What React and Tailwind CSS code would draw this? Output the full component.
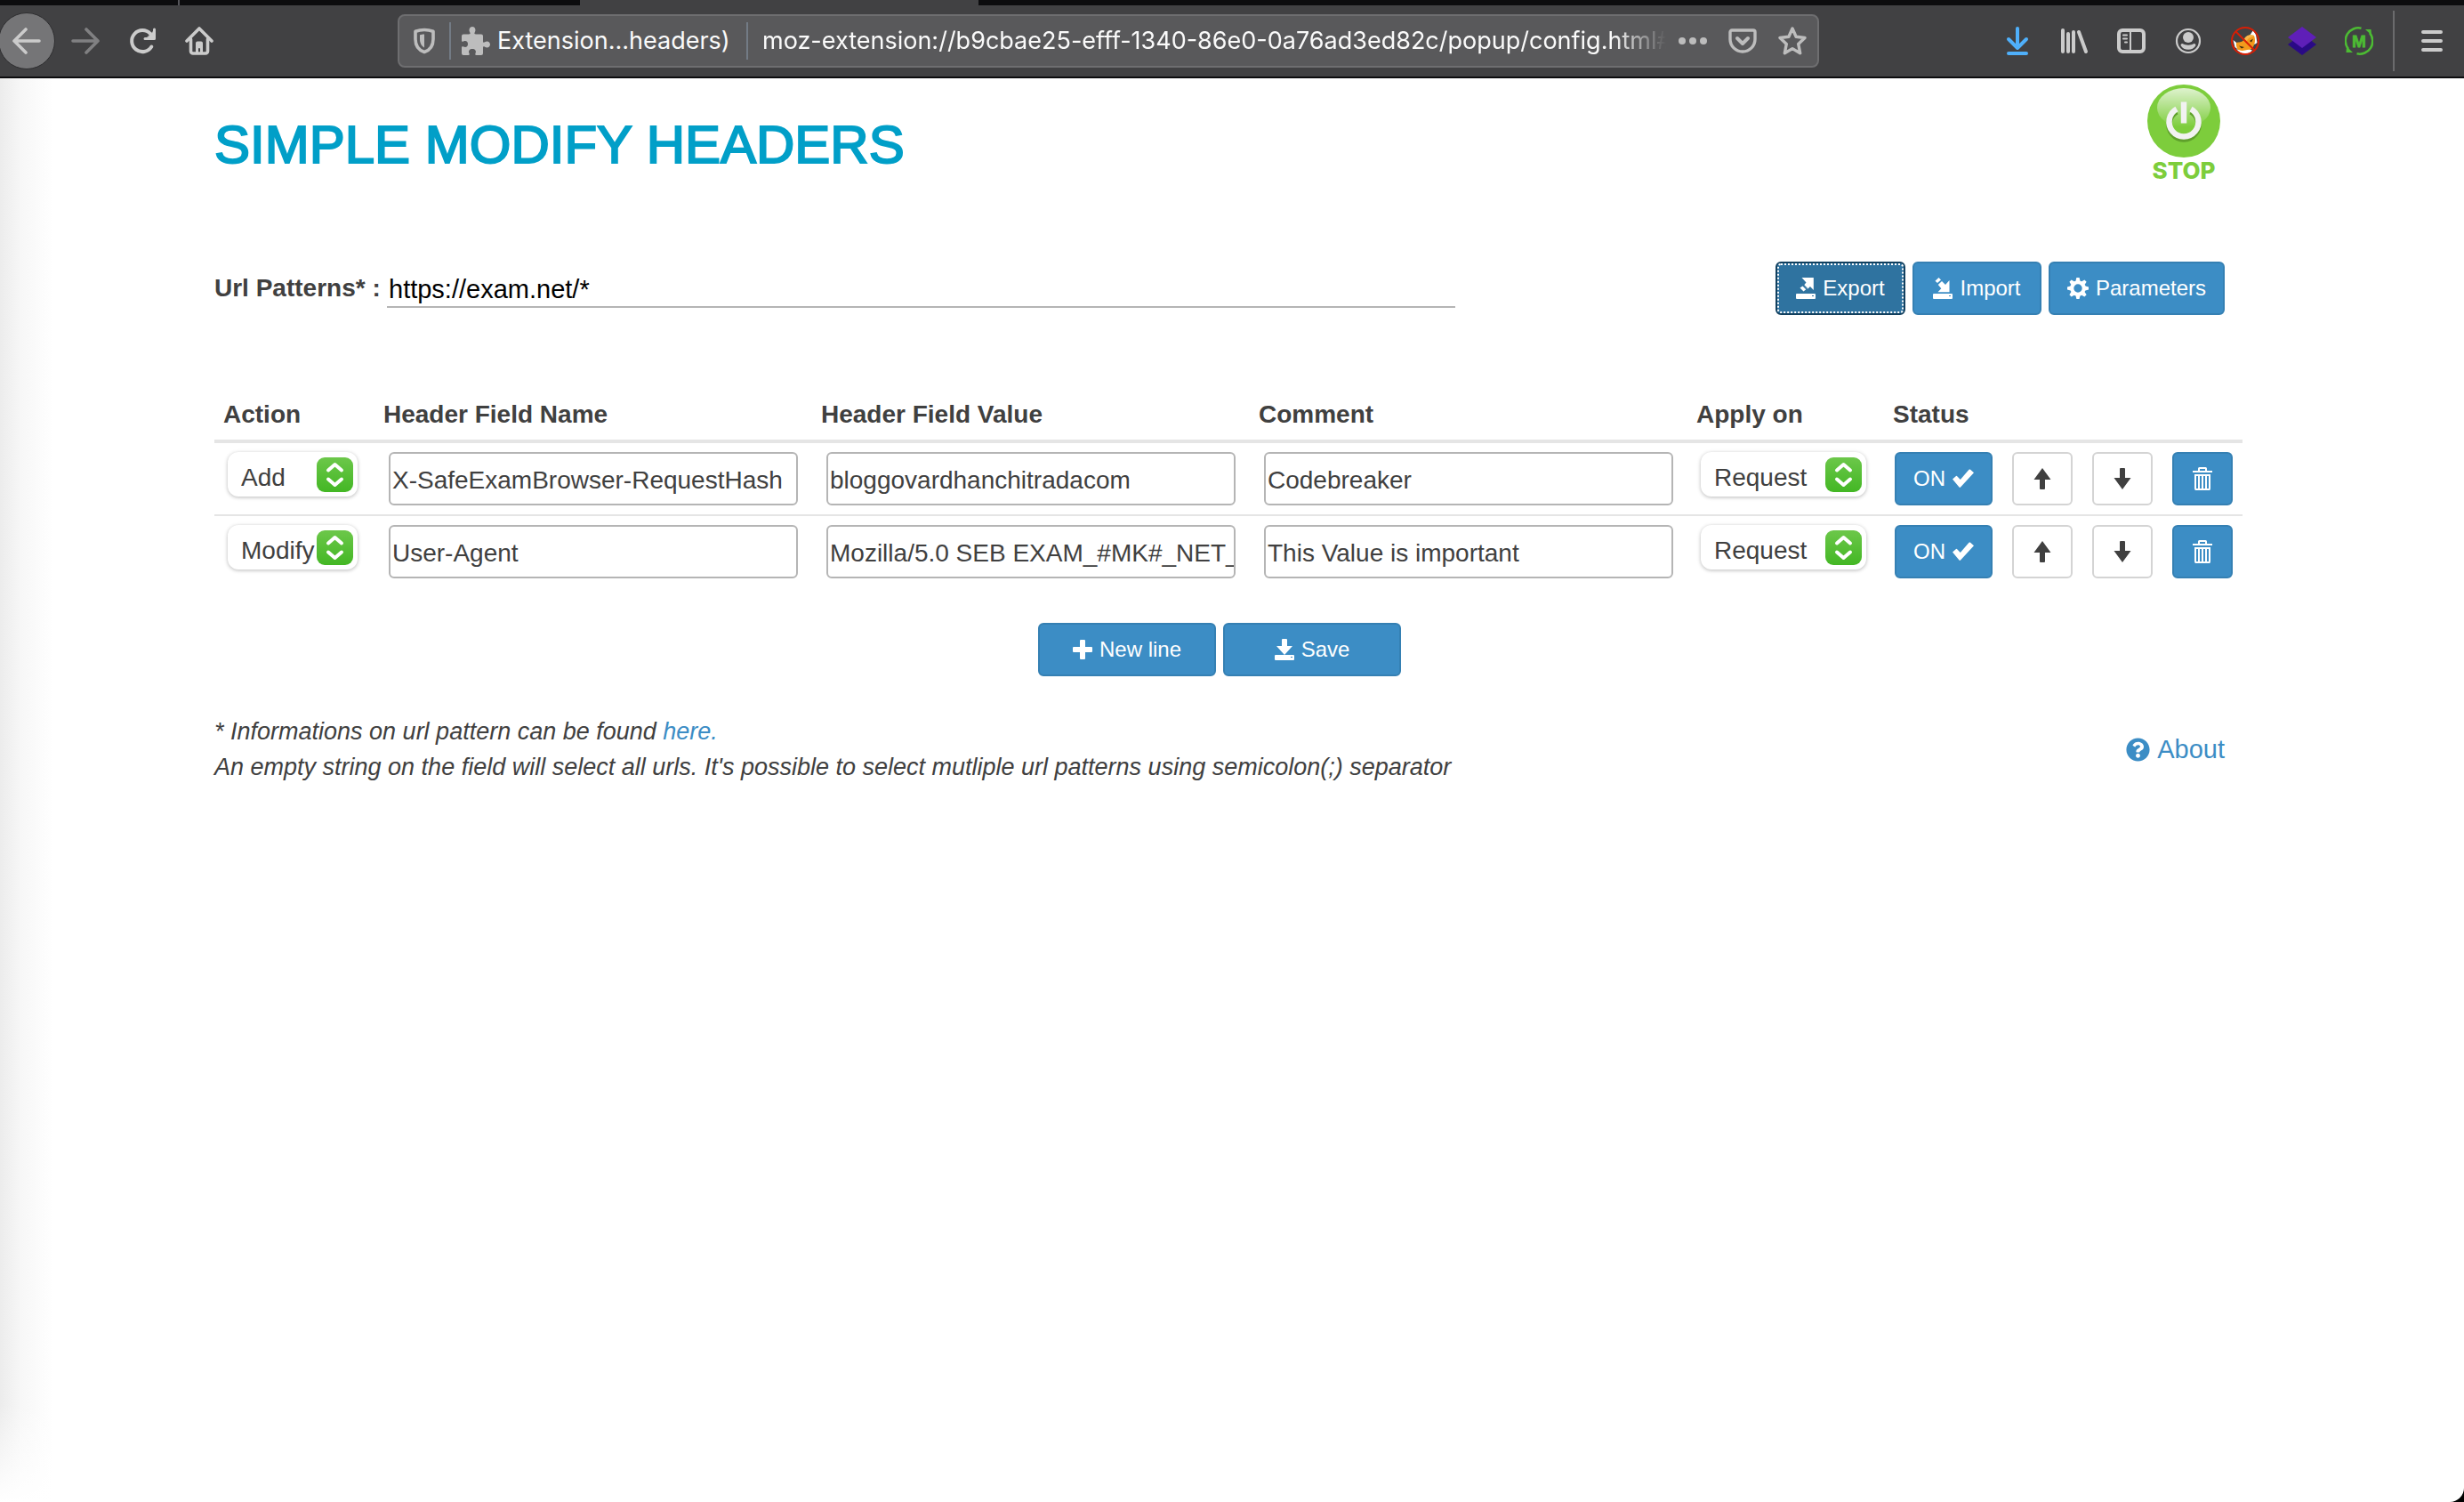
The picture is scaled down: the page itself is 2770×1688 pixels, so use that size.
import React from "react";
import { FaQuestionCircle } from "react-icons/fa";

/* ---------- browser toolbar icons ---------- */

const stroke = {
  fill: "none",
  stroke: "currentColor",
  strokeLinecap: "round",
  strokeLinejoin: "round",
};

function BackIcon() {
  return (
    <svg viewBox="0 0 32 32" className="size-8" {...stroke} strokeWidth="3.6">
      <path d="M30 16H2M15 3 2 16l13 13" />
    </svg>
  );
}

function ForwardIcon() {
  return (
    <svg viewBox="0 0 32 32" className="size-8" {...stroke} strokeWidth="3.6">
      <path d="M2 16h28M17 3l13 13-13 13" />
    </svg>
  );
}

function ReloadIcon() {
  return (
    <svg viewBox="0 0 32 32" className="size-8" {...stroke} strokeWidth="4">
      <path d="M26.300 22.500A12 12 0 1 1 25 8" />
      <path d="M29.500 3v10.500H19" strokeWidth="3" />
      <path d="M29 5v8h-8z" fill="currentColor" strokeWidth="1" />
    </svg>
  );
}

function HomeIcon() {
  return (
    <svg viewBox="0 0 32 32" className="size-8" {...stroke} strokeWidth="3.6">
      <path d="M2 16 16 2l14 14" />
      <path d="M6.500 14v13.500a2.500 2.500 0 0 0 2.500 2.500h14a2.500 2.500 0 0 0 2.500-2.500V14" />
      <path
        d="M12 31V18.500a2 2 0 0 1 2-2h4a2 2 0 0 1 2 2V31h-3v-6a1 1 0 0 0-2 0v6z"
        fill="currentColor"
        stroke="none"
      />
    </svg>
  );
}

function ShieldIcon() {
  return (
    <svg viewBox="0 0 32 32" className="size-8" {...stroke}>
      <path
        d="M16 3.500c3.500 0 6.800.6 10 1.700V14c0 7.500-4 12.500-10 14.500C10 26.500 6 21.500 6 14V5.200c3.200-1.100 6.500-1.700 10-1.700z"
        strokeWidth="3.600"
      />
      <path
        d="M16 8.500c-2 0-3.500.2-5 .7V14c0 4.500 2 8 5 9.500z"
        fill="currentColor"
        stroke="none"
      />
    </svg>
  );
}

function PuzzleIcon() {
  return (
    <svg viewBox="0 0 32 32" className="size-8" fill="currentColor">
      <path d="M8 8.500C9.500 8.500 10 7.800 9.300 6.500 7.500 3.500 9 0 12 0s4.500 3.500 2.700 6.500C14 7.800 14.500 8.500 16 8.500h6a2 2 0 0 1 2 2v6c0 1.300 1 1.600 2 .8 3-2 6 0 6 2.700s-3 4.700-6 2.700c-1-.8-2-.5-2 .8V30a2 2 0 0 1-2 2h-5.500c-1.300 0-1.500-.9-1-2 1.300-3-.5-5-3.500-5s-4.800 2-3.500 5c.5 1.100.3 2-1 2H2a2 2 0 0 1-2-2v-6.500c0-1.300.9-1.500 2-1 3 1.300 5-.3 5-3s-2-4.300-5-3c-1.100.5-2 .3-2-1V10.500a2 2 0 0 1 2-2z" />
    </svg>
  );
}

function PocketIcon() {
  return (
    <svg viewBox="0 0 32 32" className="size-8" {...stroke} strokeWidth="4">
      <path d="M4 4h24a2 2 0 0 1 2 2v8a14 14 0 0 1-28 0V6a2 2 0 0 1 2-2z" strokeWidth="3.400" />
      <path d="m10 13 6 6 6-6" />
    </svg>
  );
}

function StarIcon() {
  return (
    <svg viewBox="0 0 32 32" className="size-8" {...stroke} strokeWidth="3.4">
      <path d="m16 2 4.100 9.300L30 12.500l-7.300 6.900 2 10.300L16 24.600l-8.700 5.100 2-10.300L2 12.500l9.900-1.200z" />
    </svg>
  );
}

function DownloadIcon() {
  return (
    <svg viewBox="0 0 32 32" className="size-8 text-[#4fb0fb]" {...stroke} strokeWidth="4">
      <path d="M16 2v22M6 14l10 10 10-10M6 30h20" />
    </svg>
  );
}

function LibraryIcon() {
  return (
    <svg viewBox="0 0 32 32" className="size-8" {...stroke} strokeWidth="4">
      <path d="M3 4v24M9 8v20M15 6v22M21 6l8 22" />
    </svg>
  );
}

function SidebarIcon() {
  return (
    <svg viewBox="0 0 32 32" className="size-8" {...stroke} strokeWidth="4">
      <rect x="2" y="4" width="28" height="24" rx="4" />
      <path d="M15 4v24M7 9.500h4M7 13.500h4M9 17.500h2" strokeWidth="2" />
    </svg>
  );
}

function AccountIcon() {
  return (
    <svg viewBox="0 0 32 32" className="size-8" {...stroke} strokeWidth="2.2">
      <circle cx="16" cy="16" r="13" />
      <circle cx="16" cy="12" r="6" fill="currentColor" stroke="none" />
      <path
        d="M9.500 19c2 1.200 4 1.700 6.500 1.700s4.500-.5 6.500-1.700c1.600 0 2.300 1.200 1.700 2.500-1.400 2.700-4.700 4.300-8.200 4.300s-6.800-1.600-8.200-4.300c-.6-1.300.1-2.500 1.700-2.500z"
        fill="currentColor"
        stroke="none"
      />
    </svg>
  );
}

function FoxIcon() {
  return (
    <svg viewBox="0 0 32 32" className="size-8">
      <path d="M21 10 25 4l3 5 1.500 9-3 2zM2.500 15l5 4 1 7-4-3z" fill="#fff" />
      <path d="M6 18c2.500-1 6 0 9-3.500 1-4 6-6.500 11-4.500 2 5 1 11-3 15-5 4-11 4-14 2-2.500-2-3.500-6-3-9z" fill="#f39a1c" />
      <path d="M15 14.500c1-4 6-6.500 11-4.500-2 2-7 2-8 6z" fill="#f7b54a" />
      <path d="M6 25c3 1.500 6 2.500 10 1.500 3-1 6-1 8 0-2.500 3-5.500 4-8.500 4S8.500 28.500 6 25z" fill="#fff" />
      <path d="m9 21.500 6 1.500-3 1.500zM21 16l4-2.500-2 4z" fill="#3a2a10" />
      <circle cx="16" cy="16" r="15" fill="none" stroke="#d81e05" strokeWidth="2" />
      <path d="m5.500 5.500 21 21" stroke="#d81e05" strokeWidth="2" />
    </svg>
  );
}

function LayersIcon() {
  return (
    <svg viewBox="0 0 32 32" className="size-8">
      <path d="m16 8 16 12-16 12L0 20z" fill="#2a0a85" />
      <path d="m16 0 16 12-16 12L0 12z" fill="#5f1fb8" />
    </svg>
  );
}

function MIcon() {
  return (
    <svg viewBox="0 0 32 32" className="size-8" fill="none" stroke="#4cbb33" strokeWidth="2.6">
      <path d="M18.500 1.700A14.500 14.500 0 0 0 4 25" />
      <path d="M13.500 30.300A14.500 14.500 0 0 0 28 7" />
      <path d="M23 3h6.500l.5 6.500zM9 29H1.500L2 22z" fill="#4cbb33" stroke="none" />
      <text
        x="16"
        y="23"
        textAnchor="middle"
        fill="#4cbb33"
        stroke="#4cbb33"
        strokeWidth="0.8"
        className="font-['Liberation_Sans',sans-serif] text-[19px] font-bold"
      >
        M
      </text>
    </svg>
  );
}

function MenuIcon() {
  return (
    <svg viewBox="0 0 32 32" className="size-8" {...stroke} strokeWidth="4">
      <path d="M6 6h20M6 16h20M6 26h20" />
    </svg>
  );
}

/* ---------- page icons ---------- */

function Tray() {
  return <path d="M1 18h20a1 1 0 0 1 1 1v4a1 1 0 0 1-1 1H1a1 1 0 0 1-1-1v-4a1 1 0 0 1 1-1zm17 2v1h2v-1z" />;
}

function ExportIcon() {
  return (
    <svg viewBox="0 0 22 24" className="h-6 w-[22px]" fill="currentColor">
      <path d="M6.500 0h13.300v14l-3.800-4-3 3-4-4.500 2.500-3z" />
      <path d="m7.500 9.500 3.800 3.800-2.800 2.200-4-4z" />
      <path d="m6.800 8.700 5.200 5.200" stroke="#2f73a0" strokeWidth="1" transform="translate(1.500 -1)" />
      <Tray />
    </svg>
  );
}

function ImportIcon() {
  return (
    <svg viewBox="0 0 22 24" className="h-6 w-[22px]" fill="currentColor">
      <path d="M6.500 0 9 2.500 5 6 2.500 3.700z" />
      <path d="m10 4 4 4 4.500-5v13.200H5.500l3.800-4-3.500-4.200z" />
      <Tray />
    </svg>
  );
}

function CogIcon() {
  return (
    <svg viewBox="0 0 24 24" className="size-6" fill="currentColor">
      <circle cx="12" cy="12" r="6.700" fill="none" stroke="currentColor" strokeWidth="4" />
      {[0, 45, 90, 135, 180, 225, 270, 315].map((a) => (
        <path key={a} d="M9.300 4.500 10.400 0h3.200l1.100 4.500z" transform={`rotate(${a} 12 12)`} />
      ))}
    </svg>
  );
}

function PlusIcon() {
  return (
    <svg viewBox="0 0 22 22" className="size-[22px]" fill="currentColor">
      <rect x="8" y="0" width="6" height="22" rx="1" />
      <rect x="0" y="8" width="22" height="6" rx="1" />
    </svg>
  );
}

function SaveIcon() {
  return (
    <svg viewBox="0 0 22 24" className="h-6 w-[22px]" fill="currentColor">
      <path d="M9 0h4a1 1 0 0 1 1 1v7h6l-9 10L2 8h6V1a1 1 0 0 1 1-1z" />
      <Tray />
    </svg>
  );
}

function CheckIcon() {
  return (
    <svg viewBox="0 0 24 22" className="h-[22px] w-6" fill="currentColor">
      <path d="M0 11.500 4 8q.6-.4 1.200.2L8.800 12 18.500.8q.6-.6 1.300-.2L24 4.300 9 20.600q-.8.800-1.500 0z" />
    </svg>
  );
}

function ArrowIcon({ down }) {
  return (
    <svg viewBox="0 0 20 24" className={down ? "h-6 w-5 rotate-180" : "h-6 w-5"} fill="currentColor">
      <path d="M10 0 19.500 13H13v10a1 1 0 0 1-1 1H8a1 1 0 0 1-1-1V13H.5z" />
    </svg>
  );
}

function TrashIcon() {
  return (
    <svg viewBox="0 0 22 26" className="h-[26px] w-[22px]" fill="none" stroke="currentColor">
      <path d="M7 4V1.500q0-.5.500-.5h7q.5 0 .5.500V4" strokeWidth="2" />
      <path d="M0 5h22" strokeWidth="2" />
      <path d="M3 8v16q0 1 1 1h14q1 0 1-1V8M2 9h18M2.500 25h17" strokeWidth="2" />
      <path d="M7 9v15M11 9v15M15 9v15" strokeWidth="2" />
    </svg>
  );
}

function StopButton() {
  return (
    <button type="button" className="mr-1 flex flex-col items-center" aria-label="Stop">
      <svg viewBox="0 0 84 84" className="size-[84px]">
        <defs>
          <linearGradient id="gloss" x1="0" y1="0" x2="0" y2="1">
            <stop offset="0" stopColor="#fff" stopOpacity="0.750" />
            <stop offset="1" stopColor="#fff" stopOpacity="0" />
          </linearGradient>
        </defs>
        <circle cx="42" cy="42" r="41" fill="#7dcd3c" />
        <ellipse cx="42" cy="27" rx="30" ry="22" fill="url(#gloss)" />
        <g fill="none" strokeWidth="6.500">
          <path d="M34 29.500A16.500 16.500 0 1 0 50 29.500" stroke="#5fa02b" transform="translate(0 2)" />
          <path d="M34 28.500A16.500 16.500 0 1 0 50 28.500" stroke="#f2f2f2" />
          <path d="M42 20.500v24" stroke="#f2f2f2" />
        </g>
      </svg>
      <span className="font-[Inter,sans-serif] text-[26px] leading-7 font-extrabold text-[#7dcd3c]">STOP</span>
    </button>
  );
}

/* ---------- controls ---------- */

const primary = "flex h-15 items-center justify-center gap-2 rounded-md border-2 border-[#3580b3] bg-[#3c8dc5] text-2xl text-white";

const cell = "border-b-2 border-[#e5e5e5] px-2.5 py-2.5 group-last:border-b-0";

function Select({ label, value, options }) {
  return (
    <div className="relative ml-[5px] h-[50px]">
      <select
        aria-label={label}
        defaultValue={value}
        className="h-[50px] w-full appearance-none rounded-xl bg-white pt-2 pl-[15px] text-[28px] leading-8 shadow-[0_1px_4px_rgba(0,0,0,0.28)]"
      >
        {options.map((o) => (
          <option key={o}>{o}</option>
        ))}
      </select>
      <svg viewBox="0 0 41 39" className="pointer-events-none absolute top-1.5 right-[5px] h-[39px] w-[41px]">
        <defs>
          <linearGradient id="stepper" x1="0" y1="0" x2="0" y2="1">
            <stop offset="0" stopColor="#6cc74a" />
            <stop offset="1" stopColor="#43b724" />
          </linearGradient>
        </defs>
        <rect width="41" height="39" rx="9" fill="url(#stepper)" />
        <path
          d="m13 14.500 7.500-6.500 7.500 6.500M13 24.500l7.500 6.500 7.500-6.500"
          fill="none"
          stroke="#fff"
          strokeWidth="4"
          strokeLinecap="round"
          strokeLinejoin="round"
        />
      </svg>
    </div>
  );
}

const rows = [
  { action: "Add", name: "X-SafeExamBrowser-RequestHash", value: "bloggovardhanchitradacom", comment: "Codebreaker" },
  { action: "Modify", name: "User-Agent", value: "Mozilla/5.0 SEB EXAM_#MK#_NET_", comment: "This Value is important" },
];

function Field({ label, value }) {
  return (
    <input
      type="text"
      aria-label={label}
      defaultValue={value}
      className="mx-1.5 block h-15 w-[calc(100%-12px)] rounded-md border-2 border-[#b5b5b5] bg-white pt-1 pl-0.5 text-[28px]"
    />
  );
}

function Divider() {
  return <span className="h-[42px] w-0.5 shrink-0 bg-[#737b85]" />;
}

function IconButton({ label, children, className = "" }) {
  return (
    <button type="button" aria-label={label} className={`flex size-8 shrink-0 items-center justify-center ${className}`}>
      {children}
    </button>
  );
}

function Browser() {
  return (
    <header className="border-b-2 border-[#0c0c0e] bg-[#414143] text-[#cbcbcb]">
      <div className="flex h-1.5">
        <div className="w-[202px] border-r-2 border-[#55555a] bg-[#0c0c0e]" />
        <div className="w-[450px] bg-[#0c0c0e]" />
        <div className="w-[448px]" />
        <div className="flex-1 bg-[#0c0c0e]" />
      </div>
      <nav className="flex h-20 items-center">
        <button
          type="button"
          aria-label="Back"
          className="-ml-0.5 flex size-16 items-center justify-center rounded-full border border-[#2e2e30] bg-[#757577]"
        >
          <BackIcon />
        </button>
        <IconButton label="Forward" className="ml-[18px] text-[#808082]"><ForwardIcon /></IconButton>
        <IconButton label="Reload" className="ml-8"><ReloadIcon /></IconButton>
        <IconButton label="Home" className="ml-8"><HomeIcon /></IconButton>

        <div className="ml-[207px] flex h-15 w-[1598px] min-w-0 shrink items-center rounded-lg border-2 border-[#6e6e70] bg-[#59595b] font-[Inter,sans-serif] text-[27px] text-[#bdbdbd]">
          <IconButton label="Tracking protection" className="mr-3 ml-3"><ShieldIcon /></IconButton>
          <Divider />
          <span className="mr-2 ml-3"><PuzzleIcon /></span>
          <span className="mr-[22px] w-[258px] shrink-0 whitespace-nowrap text-[#fafafa]">Extension...headers)</span>
          <Divider />
          <input
            type="text"
            aria-label="Address"
            defaultValue="moz-extension://b9cbae25-efff-1340-86e0-0a76ad3ed82c/popup/config.html#"
            className="ml-4 min-w-0 flex-1 bg-transparent text-[#fafafa] [mask-image:linear-gradient(to_left,transparent,black_60px)]"
          />
          <IconButton label="Page actions" className="ml-3.5">
            <svg viewBox="0 0 32 32" className="size-8" fill="currentColor">
              <circle cx="4" cy="16" r="4" />
              <circle cx="16" cy="16" r="4" />
              <circle cx="28" cy="16" r="4" />
            </svg>
          </IconButton>
          <IconButton label="Save to Pocket" className="ml-6"><PocketIcon /></IconButton>
          <IconButton label="Bookmark" className="mr-3 ml-6"><StarIcon /></IconButton>
        </div>

        <div className="ml-auto flex items-center gap-8">
          <IconButton label="Downloads"><DownloadIcon /></IconButton>
          <IconButton label="Library"><LibraryIcon /></IconButton>
          <IconButton label="Sidebars"><SidebarIcon /></IconButton>
          <IconButton label="Account"><AccountIcon /></IconButton>
          <IconButton label="Fox blocker"><FoxIcon /></IconButton>
          <IconButton label="Layers"><LayersIcon /></IconButton>
          <IconButton label="Modify headers"><MIcon /></IconButton>
        </div>
        <span className="ml-[22px] h-[68px] w-0.5 bg-[#6b6b6d]" />
        <IconButton label="Menu" className="mr-5 ml-[26px]"><MenuIcon /></IconButton>
      </nav>
    </header>
  );
}

export default function App() {
  return (
    <div className="flex min-h-screen flex-col bg-black font-['Liberation_Sans',Arial,sans-serif] text-[28px] leading-10 text-[#404040]">
      <Browser />
      <main className="flex-1 rounded-br-2xl bg-white bg-[linear-gradient(to_top,#ffffff,transparent_110px),linear-gradient(to_right,#ececec,#f7f7f7_24px,#ffffff_60px)] pr-[249px] pl-[241px]">
        <div className="mr-5 flex items-start justify-between pt-1.5">
          <h1 className="pt-9 text-[60px] leading-[66px] font-normal text-[#019fc8] [-webkit-text-stroke:2px_#019fc8]">
            SIMPLE MODIFY HEADERS
          </h1>
          <StopButton />
        </div>

        <div className="mt-[88px] mr-5 flex items-center justify-between">
          <div className="flex items-center">
            <label htmlFor="patterns" className="w-[194px] font-bold whitespace-nowrap">Url Patterns* :</label>
            <input
              id="patterns"
              type="text"
              defaultValue="https://exam.net/*"
              className="h-11 w-[1201px] border-b-2 border-[#b5b5b5] bg-transparent pt-1 pl-0.5 text-[29px] text-black"
            />
          </div>
          <div className="flex gap-2">
            <button
              type="button"
              className="flex h-15 w-[146px] items-center justify-center gap-2 rounded-md border-2 border-[#12405f] bg-[#2f73a0] text-2xl text-white outline-2 -outline-offset-4 outline-white outline-dotted"
            >
              <ExportIcon />
              Export
            </button>
            <button type="button" className={`${primary} w-[145px]`}>
              <ImportIcon />
              Import
            </button>
            <button type="button" className={`${primary} w-[198px]`}>
              <CogIcon />
              Parameters
            </button>
          </div>
        </div>

        <table className="mt-[82px] w-full table-fixed border-separate border-spacing-0">
          <colgroup>
            <col className="w-[180px]" />
            <col />
            <col />
            <col />
            <col className="w-[221px]" />
            <col className="w-[134px]" />
            <col className="w-[90px]" />
            <col className="w-[90px]" />
            <col className="w-[89px]" />
          </colgroup>
          <thead>
            <tr className="text-left">
              {["Action", "Header Field Name", "Header Field Value", "Comment", "Apply on", "Status"].map((h) => (
                <th key={h} className="border-b-4 border-[#e5e5e5] px-2.5 pt-2.5 pb-2 font-bold">{h}</th>
              ))}
              <th colSpan={3} className="border-b-4 border-[#e5e5e5]" />
            </tr>
          </thead>
          <tbody>
            {rows.map((r) => (
              <tr key={r.action} className="group">
                <td className={`${cell} pr-[19px] align-top`}>
                  <Select label="Action" value={r.action} options={["Add", "Modify", "Delete"]} />
                </td>
                <td className={cell}><Field label="Header field name" value={r.name} /></td>
                <td className={cell}><Field label="Header field value" value={r.value} /></td>
                <td className={cell}><Field label="Comment" value={r.comment} /></td>
                <td className={`${cell} pr-5 align-top`}>
                  <Select label="Apply on" value="Request" options={["Request", "Response"]} />
                </td>
                <td className={cell}>
                  <button type="button" className={`${primary} ml-0.5 w-[110px]`}>
                    ON
                    <CheckIcon />
                  </button>
                </td>
                <td className={cell}>
                  <button type="button" aria-label="Move up" className="flex h-15 w-[68px] items-center justify-center rounded-md border-2 border-[#d4d4d4] bg-white">
                    <ArrowIcon />
                  </button>
                </td>
                <td className={cell}>
                  <button type="button" aria-label="Move down" className="flex h-15 w-[68px] items-center justify-center rounded-md border-2 border-[#d4d4d4] bg-white">
                    <ArrowIcon down />
                  </button>
                </td>
                <td className={cell}>
                  <button type="button" aria-label="Delete" className={`${primary} w-[68px]`}>
                    <TrashIcon />
                  </button>
                </td>
              </tr>
            ))}
          </tbody>
        </table>

        <div className="mt-10 mr-5 flex justify-center gap-2">
          <button type="button" className={`${primary} w-[200px]`}>
            <PlusIcon />
            New line
          </button>
          <button type="button" className={`${primary} w-[200px]`}>
            <SaveIcon />
            Save
          </button>
        </div>

        <div className="mt-[42px] mr-5 flex items-center justify-between">
          <p className="text-[27px] italic">
            * Informations on url pattern can be found <a href="#patterns" className="text-[#3c8dc5]">here.</a>
            <br />
            An empty string on the field will select all urls. It's possible to select mutliple url patterns using
            semicolon(;) separator
          </p>
          <a href="#about" className="flex items-center gap-2 text-[29px] text-[#3c8dc5]">
            <FaQuestionCircle className="size-[27px]" />
            About
          </a>
        </div>
      </main>
    </div>
  );
}
